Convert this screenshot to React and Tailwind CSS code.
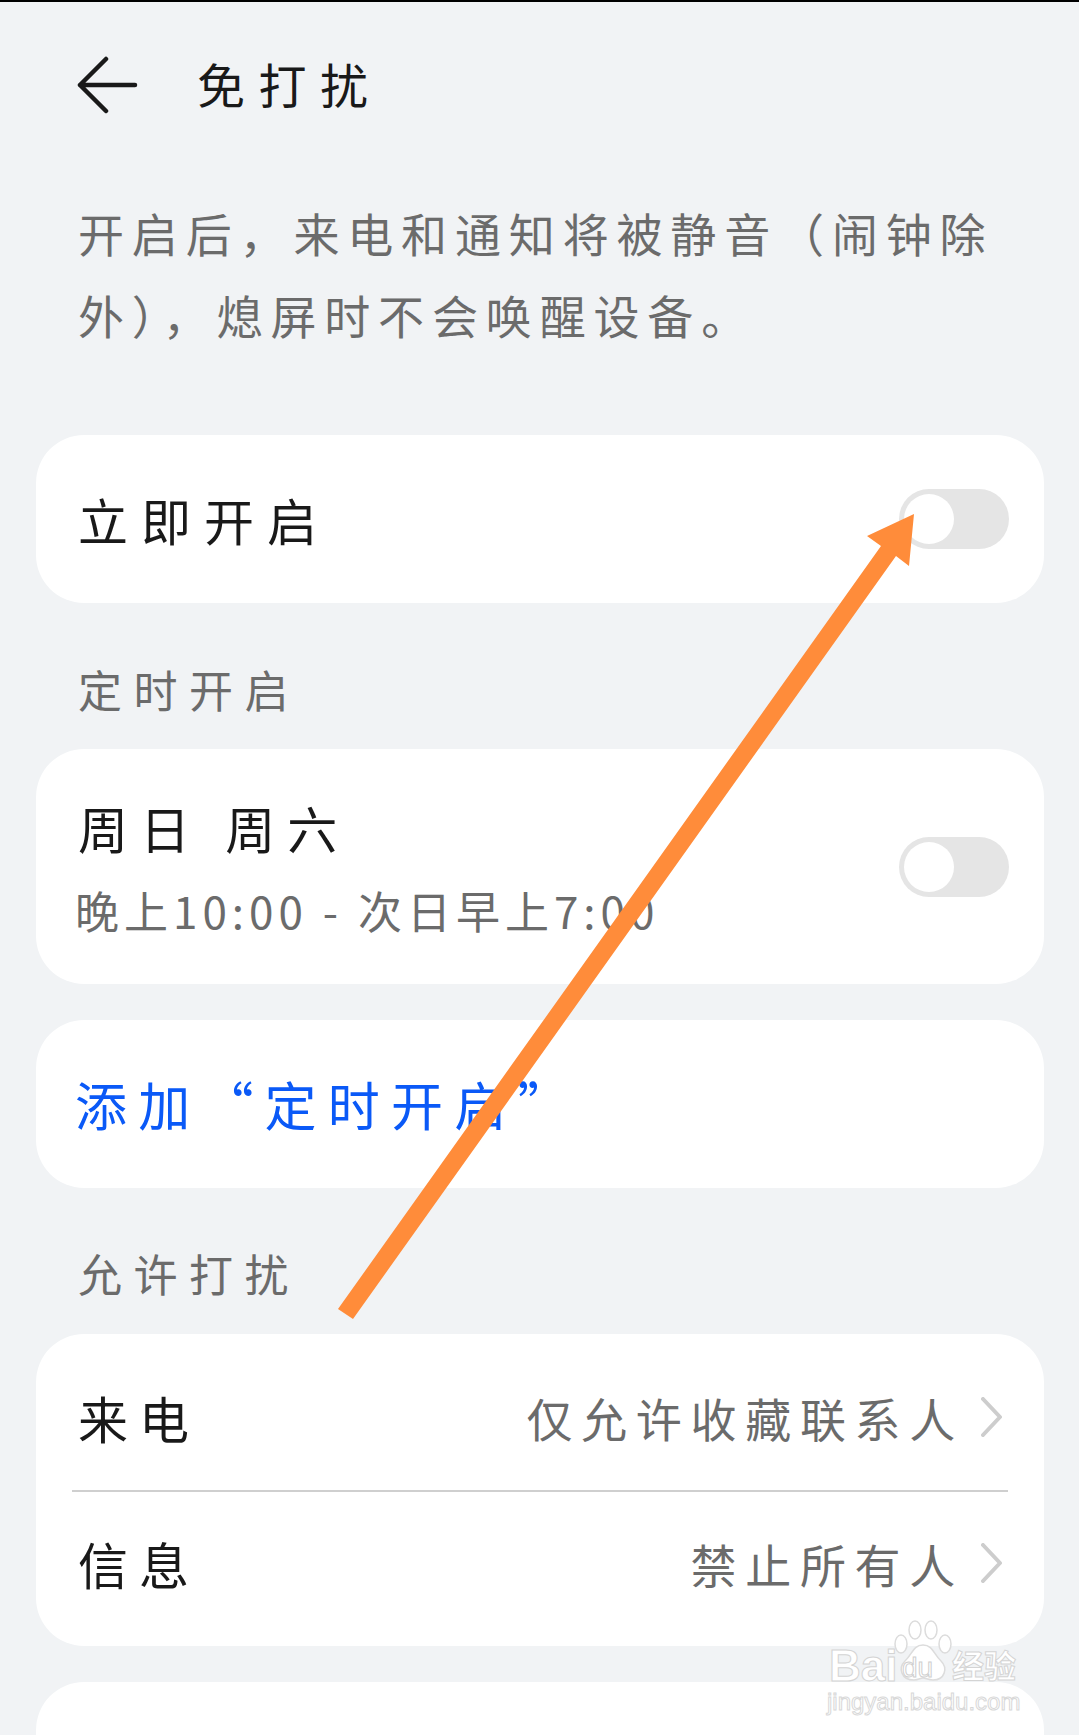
const font = "font-['Noto_Sans_CJK_SC','Noto_Sans',sans-serif]";

function Toggle() {
  return (
    <div className="w-[110px] h-[60px] rounded-full bg-[#e5e5e5] p-[5px] shrink-0">
      <div className="w-[50px] h-[50px] rounded-full bg-white" />
    </div>
  );
}

function Chevron() {
  return (
    <svg width="22" height="40" viewBox="0 0 22 40" className="ml-[17px] shrink-0" fill="none">
      <path d="M2 2 L19 20 L2 38" stroke="#cdcdcd" strokeWidth="4" strokeLinecap="round" strokeLinejoin="round" />
    </svg>
  );
}

function Label({ children, mt }) {
  return (
    <div className={`pl-[42px] h-[60px] flex items-center text-[44px] leading-none tracking-[11.5px] text-[#6b6b6b] whitespace-nowrap ${mt}`}>
      {children}
    </div>
  );
}

function Row({ title, value, pad }) {
  return (
    <div className={`h-[156px] flex items-center justify-between pl-[42px] pr-[41px] ${pad}`}>
      <span className="text-[50px] leading-none tracking-[11px] text-[#191919] whitespace-nowrap">{title}</span>
      <div className="flex items-center">
        <span className="text-[46px] leading-none tracking-[8.7px] text-[#6b6b6b] whitespace-nowrap">{value}</span>
        <Chevron />
      </div>
    </div>
  );
}

export default function App() {
  return (
    <div className={`relative w-[1079px] h-[1735px] overflow-hidden bg-[#f1f3f5] border-t-2 border-black ${font}`}>
      <div className="pl-9 pr-[35px]">
        <header className="pt-[53px] pl-[40px] h-[113px] flex items-center gap-[59px]">
          <svg width="62" height="58" viewBox="0 0 62 58" fill="none" className="shrink-0">
            <path d="M59 29 H4 M30 3 L4 29 L30 55" stroke="#191919" strokeWidth="4.5" strokeLinecap="round" strokeLinejoin="round" />
          </svg>
          <h1 className="-mt-[4px] text-[48px] font-normal leading-none tracking-[13.5px] text-[#191919] whitespace-nowrap">免打扰</h1>
        </header>

        <p className="mt-[76px] pl-[42px] text-[46px] leading-[82px] tracking-[7.85px] text-[#6b6b6b] whitespace-nowrap">
          开启后，来电和通知将被静音（闹钟除
          <br />
          外），熄屏时不会唤醒设备。
        </p>

        <section className="mt-[80px] h-[168px] rounded-[48px] bg-white flex items-center justify-between pl-[42px] pr-[35px]">
          <span className="text-[50px] leading-none tracking-[13px] text-[#191919] whitespace-nowrap">立即开启</span>
          <Toggle />
        </section>

        <Label mt="mt-[56px]">定时开启</Label>

        <section className="mt-[30px] h-[235px] rounded-[48px] bg-white flex items-center justify-between pl-[42px] pr-[35px]">
          <div>
            <div className="text-[50px] leading-none tracking-[12px] text-[#191919] whitespace-pre">周日 周六</div>
            <div className="mt-[36px] -ml-[3px] text-[44px] leading-none tracking-[5px] text-[#6b6b6b] whitespace-pre">晚上10:00 - 次日早上7:00</div>
          </div>
          <Toggle />
        </section>

        <section className="mt-9 h-[168px] rounded-[48px] bg-white flex items-center pl-[39px]">
          <span className="text-[52px] leading-none tracking-[11.2px] text-[#0a59f7] whitespace-nowrap">添加“定时开启”</span>
        </section>

        <Label mt="mt-[55px]">允许打扰</Label>

        <section className="mt-[31px] h-[312px] rounded-[48px] bg-white">
          <Row title="来电" value="仅允许收藏联系人" pad="pt-[10px]" />
          <div className="mx-9 h-[1.5px] bg-[#cfcfcf]" />
          <Row title="信息" value="禁止所有人" pad="pb-[14px]" />
        </section>

        <section className="mt-9 h-[120px] rounded-[48px] bg-white" />
      </div>

      {/* annotation arrow */}
      <svg className="absolute left-0 top-[-2px] pointer-events-none" width="1079" height="1735" viewBox="0 0 1079 1735">
        <polygon points="338,1309 353,1319 896,556 909,566 914,514 867,536 881,546" fill="#ff8c3a" />
      </svg>

      {/* watermark */}
      <div className="absolute left-[826px] top-[1618px] w-[200px] h-[96px] pointer-events-none">
        <svg className="absolute left-[66px] top-0" width="62" height="62" viewBox="0 0 62 62" fill="#ffffff" stroke="#dcdcdc" strokeWidth="1.5">
          <ellipse cx="9" cy="24" rx="6" ry="9" />
          <ellipse cx="23" cy="10" rx="6" ry="9" />
          <ellipse cx="39" cy="10" rx="6" ry="9" />
          <ellipse cx="53" cy="24" rx="6" ry="9" />
          <path d="M31 25 C21 25 20 35 13 41 C6 48 9 60 22 60 C27 60 28 58 31 58 C34 58 36 60 41 60 C53 60 56 48 49 41 C42 35 41 25 31 25 Z" />
        </svg>
        <div className="absolute left-[3px] top-[24px] text-[44px] leading-[44px] font-bold text-white [-webkit-text-stroke:1px_#d4d4d4] font-['Liberation_Sans',sans-serif] whitespace-nowrap">Bai</div>
        <div className="absolute left-[76px] top-[34px] text-[28px] leading-[28px] text-white [-webkit-text-stroke:1px_#cfcfcf] font-['Liberation_Sans',sans-serif] whitespace-nowrap">du</div>
        <div className="absolute left-[126px] top-[26px] text-[32px] leading-[36px] font-bold text-white [-webkit-text-stroke:1px_#d4d4d4] whitespace-nowrap">经验</div>
        <div className="absolute left-[1px] top-[70px] text-[24px] leading-[24px] text-white [-webkit-text-stroke:1px_#d8d8d8] font-['Liberation_Sans',sans-serif] whitespace-nowrap">jingyan.baidu.com</div>
      </div>
    </div>
  );
}
